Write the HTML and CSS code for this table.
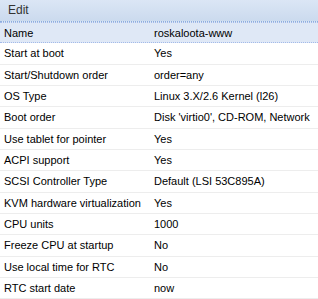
FILE: index.html
```html
<!DOCTYPE html>
<html>
<head>
<meta charset="utf-8">
<link rel="stylesheet" href="styles.css">
</head>
<body>
<div class="panel">
  <div class="header">Edit</div>
  <div class="grid">
    <div class="row selected"><div class="key">Name</div><div class="val">roskaloota-www</div></div>
    <div class="row"><div class="key">Start at boot</div><div class="val">Yes</div></div>
    <div class="row"><div class="key">Start/Shutdown order</div><div class="val">order=any</div></div>
    <div class="row"><div class="key">OS Type</div><div class="val">Linux 3.X/2.6 Kernel (l26)</div></div>
    <div class="row"><div class="key">Boot order</div><div class="val">Disk 'virtio0', CD-ROM, Network</div></div>
    <div class="row"><div class="key">Use tablet for pointer</div><div class="val">Yes</div></div>
    <div class="row"><div class="key">ACPI support</div><div class="val">Yes</div></div>
    <div class="row"><div class="key">SCSI Controller Type</div><div class="val">Default (LSI 53C895A)</div></div>
    <div class="row"><div class="key">KVM hardware virtualization</div><div class="val">Yes</div></div>
    <div class="row"><div class="key">CPU units</div><div class="val">1000</div></div>
    <div class="row"><div class="key">Freeze CPU at startup</div><div class="val">No</div></div>
    <div class="row"><div class="key">Use local time for RTC</div><div class="val">No</div></div>
    <div class="row"><div class="key">RTC start date</div><div class="val">now</div></div>
  </div>
</div>
</body>
</html>
```
FILE: styles.css
```css
html, body {
  margin: 0;
  padding: 0;
  background: #ffffff;
}
.panel {
  width: 318px;
  height: 299px;
  overflow: hidden;
  font-family: "Liberation Sans", Arial, sans-serif;
  font-size: 11px;
  color: #000;
}
.header {
  height: 21px;
  line-height: 21px;
  padding-left: 8px;
  color: #333;
  background: linear-gradient(#dbe6f5, #cbdaee);
  border-bottom: 1px dotted #8eaedd;
  font-size: 12px;
}
.row {
  display: flex;
  align-items: center;
  height: 20.33px;
  border-bottom: 1px solid #ededed;
}
.row.selected {
  background: #dfe8f6;
  border-top: 1px dotted #a3bae9;
  border-bottom: 1px dotted #a3bae9;
  height: 19.33px;
}
.key {
  width: 150px;
  padding-left: 4px;
  box-sizing: border-box;
}
.val {
  padding-left: 4px;
  white-space: nowrap;
}
```
